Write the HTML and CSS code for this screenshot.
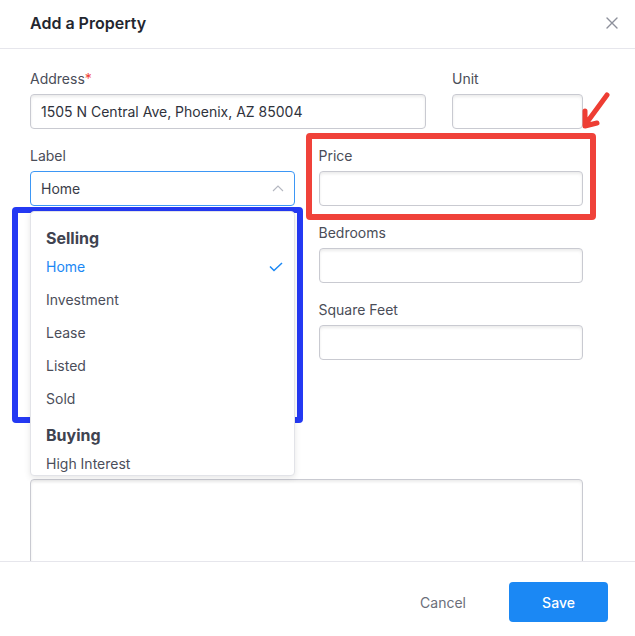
FILE: index.html
```html
<!DOCTYPE html>
<html lang="en">
<head>
    <meta charset="UTF-8">
    <meta name="viewport" content="width=device-width, initial-scale=1.0">
    <title>Add a Property</title>
    <link rel="stylesheet" href="styles.css">
</head>
<body>
    <div class="modal">
        <div class="modal-header">
            <h2 class="modal-title">Add a Property</h2>
            <button class="close-btn" aria-label="Close">
                <svg width="12" height="12" viewBox="0 0 12 12"><path d="M1 1 L11 11 M11 1 L1 11" stroke="#8d909b" stroke-width="1.4" fill="none" stroke-linecap="round"/></svg>
            </button>
        </div>

        <div class="modal-body">
            <div class="row-address">
                <div class="field field-address">
                    <label>Address<span class="required">*</span></label>
                    <input class="input" type="text" value="1505 N Central Ave, Phoenix, AZ 85004">
                </div>
                <div class="field field-unit">
                    <label>Unit</label>
                    <input class="input" type="text">
                </div>
            </div>

            <div class="form-grid">
                <div class="field select-field">
                    <label>Label</label>
                    <div class="select is-open">
                        <span>Home</span>
                        <svg width="12" height="7" viewBox="0 0 12 7"><path d="M1 6 L6 1 L11 6" stroke="#b4b7c0" stroke-width="1.1" fill="none"/></svg>
                    </div>
                    <div class="dropdown">
                        <div class="group-title">Selling</div>
                        <div class="option is-selected">
                            <span>Home</span>
                            <svg width="14" height="10" viewBox="0 0 14 10"><path d="M1 4.5 L5 8.5 L13 1" stroke="#1b88f4" stroke-width="1.5" fill="none"/></svg>
                        </div>
                        <div class="option">Investment</div>
                        <div class="option">Lease</div>
                        <div class="option">Listed</div>
                        <div class="option">Sold</div>
                        <div class="group-title group-next">Buying</div>
                        <div class="option">High Interest</div>
                    </div>
                </div>
                <div class="field">
                    <label>Price</label>
                    <input class="input" type="text">
                </div>
                <div class="field field-empty"></div>
                <div class="field">
                    <label>Bedrooms</label>
                    <input class="input" type="text">
                </div>
                <div class="field field-empty"></div>
                <div class="field">
                    <label>Square Feet</label>
                    <input class="input" type="text">
                </div>
                <div class="field field-empty"></div>
                <div class="field field-empty"></div>
                <div class="field field-wide">
                    <div class="label-space"></div>
                    <textarea class="input textarea"></textarea>
                </div>
            </div>
        </div>

        <div class="modal-footer">
            <button class="btn-cancel">Cancel</button>
            <button class="btn-save">Save</button>
        </div>

        <!-- annotations drawn over the screenshot -->
        <div class="mark mark-blue"></div>
        <div class="mark mark-red"></div>
        <svg class="mark-arrow" width="40" height="46" viewBox="0 0 40 46">
            <path d="M30 6 L8 36 M8 22 L8 37 L20 34" stroke="#ee3d33" stroke-width="5" fill="none" stroke-linecap="round" stroke-linejoin="round"/>
        </svg>
    </div>
</body>
</html>
```

FILE: styles.css
```css
* {
    box-sizing: border-box;
}
body {
    margin: 0;
    font-family: Inter, "Noto Sans", sans-serif;
    background: #fff;
    color: #2f323c;
}
.modal {
    position: relative;
    width: 635px;
    height: 636px;
    display: flex;
    flex-direction: column;
    background: #fff;
    overflow: hidden;
}
.modal-header {
    display: flex;
    align-items: center;
    justify-content: space-between;
    height: 49px;
    padding: 0 17px 2px 30px;
    border-bottom: 1px solid #e6e6ec;
}
.modal-title {
    margin: 0;
    font-size: 16px;
    line-height: 24px;
    font-weight: 600;
    color: #23262f;
}
.close-btn {
    display: flex;
    padding: 0;
    border: none;
    background: none;
    cursor: pointer;
}
.modal-body {
    flex: 1;
    padding: 20px 52px 0 30px;
    overflow: hidden;
}
.row-address {
    display: flex;
    gap: 26px;
    margin-bottom: 17px;
}
.field-address {
    flex: 1;
}
.field-unit {
    width: 131px;
}
.field label {
    display: block;
    font-size: 14px;
    line-height: 20px;
    color: #4a4d58;
    margin-bottom: 5px;
}
.field-empty {
    height: 60px;
}
.label-space {
    height: 25px;
}
.required {
    color: #f0433a;
}
.input {
    display: block;
    width: 100%;
    height: 35px;
    padding: 0 10px;
    font-family: inherit;
    font-size: 14px;
    color: #2f323c;
    border: 1px solid #c9cad1;
    border-radius: 4px;
    background: #fff;
    box-shadow: inset 0 2px 3px rgba(0, 0, 0, 0.08);
    outline: none;
}
.textarea {
    height: 110px;
    resize: none;
}
.form-grid {
    display: grid;
    grid-template-columns: 1fr 1fr;
    column-gap: 24px;
    row-gap: 17px;
}
.field-wide {
    grid-column: 1 / -1;
}
.select-field {
    position: relative;
}
.select {
    display: flex;
    align-items: center;
    justify-content: space-between;
    height: 35px;
    padding: 0 10px;
    font-size: 14px;
    color: #3a3d48;
    border: 1px solid #3d97f5;
    border-radius: 4px;
    background: #fff;
}
.dropdown {
    position: absolute;
    top: calc(100% + 5px);
    left: 0;
    right: 0;
    z-index: 10;
    height: 265px;
    padding-top: 10px;
    overflow: hidden;
    background: #fff;
    border: 1px solid #e2e3e8;
    border-radius: 4px;
    box-shadow: 0 2px 6px rgba(0, 0, 0, 0.1);
}
.group-title {
    padding: 4px 15px 0;
    font-size: 16px;
    line-height: 24px;
    font-weight: 700;
    color: #404350;
}
.group-next {
    padding-top: 8px;
}
.option {
    display: flex;
    align-items: center;
    justify-content: space-between;
    height: 33px;
    padding: 0 11px 0 15px;
    font-size: 14px;
    color: #4b4e5a;
}
.option.is-selected {
    color: #1b88f4;
}
.modal-footer {
    display: flex;
    justify-content: flex-end;
    align-items: flex-start;
    gap: 27px;
    height: 75px;
    padding: 20px 27px 0 0;
    border-top: 1px solid #e6e6ec;
}
.btn-cancel {
    height: 40px;
    padding: 0 16px;
    border: none;
    background: none;
    font-family: inherit;
    font-size: 14px;
    color: #6b6e79;
    cursor: pointer;
}
.btn-save {
    width: 99px;
    height: 40px;
    border: none;
    border-radius: 4px;
    background: #1b88f4;
    font-family: inherit;
    font-size: 14px;
    font-weight: 500;
    color: #fff;
    cursor: pointer;
}
.mark {
    position: absolute;
    border-width: 6px;
    border-style: solid;
    border-radius: 4px;
    pointer-events: none;
}
.mark-blue {
    left: 12px;
    top: 207px;
    width: 291px;
    height: 216px;
    border-color: #2439f3;
}
.mark-red {
    left: 306px;
    top: 133px;
    width: 290px;
    height: 87px;
    border-color: #f0423a;
}
.mark-arrow {
    position: absolute;
    left: 577px;
    top: 89px;
}
```
